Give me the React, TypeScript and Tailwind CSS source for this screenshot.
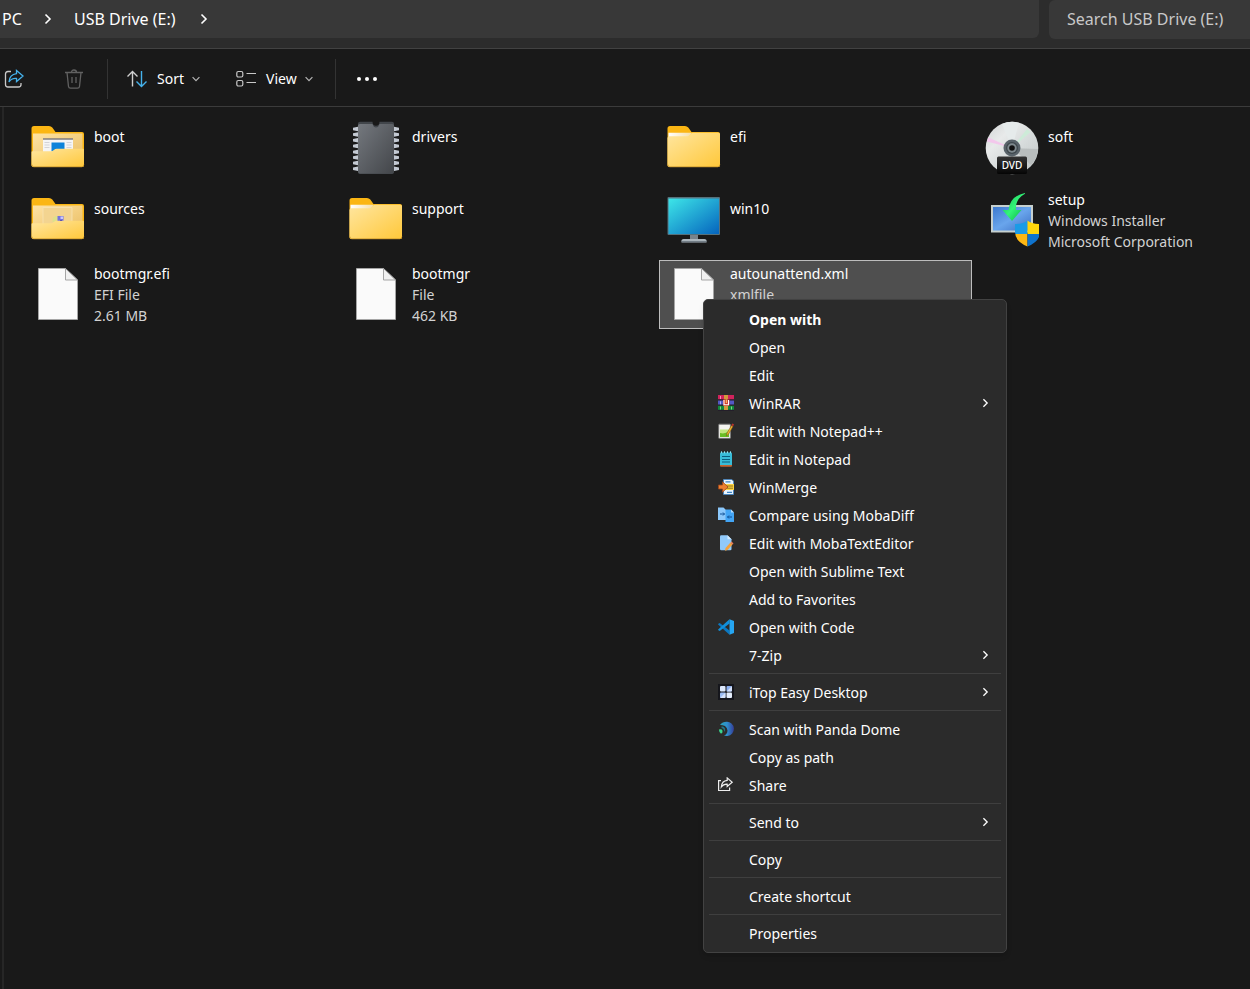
import type { ReactNode } from "react";

function Chevron({ className }: { className: string }) {
  return (
    <svg viewBox="0 0 8 12" className={className} fill="none" stroke="currentColor" strokeWidth="1.6">
      <path d="M1.5 1.5 6 6l-4.5 4.5" />
    </svg>
  );
}

function ChevronDown() {
  return (
    <svg viewBox="0 0 8 6" className="h-[6px] w-2" fill="none" stroke="#b5b5b5" strokeWidth="1.2">
      <path d="M.6 1.2 4 4.6l3.4-3.4" />
    </svg>
  );
}

function FolderIcon({ inside }: { inside?: ReactNode }) {
  return (
    <svg viewBox="0 0 54 54" className="size-[54px]">
      <defs>
        <linearGradient id="folderFront" x1="0" y1="0" x2="1" y2="1">
          <stop offset="0" stopColor="#ffe6a0" />
          <stop offset="1" stopColor="#ffc83a" />
        </linearGradient>
        <linearGradient id="folderInner" x1="0" y1="0" x2="1" y2="1">
          <stop offset="0" stopColor="#ffe3a4" />
          <stop offset="1" stopColor="#e9bd62" />
        </linearGradient>
        <linearGradient id="folderShine" x1="0" y1="0" x2="1" y2="0">
          <stop offset="0" stopColor="#ffffff" />
          <stop offset="1" stopColor="#f6dfa8" />
        </linearGradient>
      </defs>
      <path d="M.5 7.500Q.5 5 3 5H18q2 0 3.300 1.500L24.500 11h26.500Q53 11 53 13v31q0 2-2 2H2.500q-2 0-2-2z" fill="#fbb614" />
      {inside ? (
        <>
          <path d="M2 12.500h49.500V40H2z" fill="url(#folderInner)" />
          {inside}
          <path d="M.5 31q0-.7 1-.7H20q1.500 0 2.500-1l.7-.6q1-.9 2.500-.9H52q1 0 1 1V44q0 2-2 2H2.500q-2 0-2-2z" fill="url(#folderFront)" />
        </>
      ) : (
        <>
          <path d="M1.500 11.800h23l-3 5h-20z" fill="url(#folderShine)" />
          <path d="M.5 17q0-1.700 2-1.700H20q1.500 0 2.500-1.300l1.500-1.500q.7-.7 2-.7h25.500q1.500 0 1.500 1.500V44q0 2-2 2H2.500q-2 0-2-2z" fill="url(#folderFront)" />
        </>
      )}
      <path d="M.8 43.500q0 2.300 2 2.300h48q2 0 2-2.300" fill="none" stroke="#c9962a" strokeWidth=".8" />
    </svg>
  );
}

const bootPreview = (
  <>
    <path d="M12 18h30v14H12z" fill="#f5f5f5" />
    <path d="M12 18h30" stroke="#77757a" strokeWidth="1.4" />
    <path d="M13.500 21.500h5M13.500 24h5M13.500 26.500h5M35.500 21.500h5M35.500 24h5M35.500 26.500h5" stroke="#d3d3d8" strokeWidth="1" />
    <path d="M20.500 21.500h13v9h-13z" fill="#0d83da" />
  </>
);

const sourcesPreview = (
  <>
    <path d="M12 14.500h29V32H12z" fill="#f3d490" stroke="#f8e3b4" strokeWidth=".8" />
    <path d="M21.500 25l3-2h3v6h-6z" fill="#dfe08a" />
    <path d="M26.500 23h6v7h-6z" fill="#7672dc" />
    <path d="M29.500 23.500H32V26h-2.500z" fill="#c9c8fb" />
    <path d="M29 27h2v2h-2z" fill="#2b29bd" />
  </>
);

function ChipIcon() {
  const pins = [8, 13.5, 19.3, 25, 31, 36.5, 42, 47.7];
  return (
    <svg viewBox="0 0 54 54" className="size-[54px]">
      <defs>
        <linearGradient id="chip" x1="0" y1="0" x2="1" y2="1">
          <stop offset="0" stopColor="#74787e" />
          <stop offset="1" stopColor="#43464a" />
        </linearGradient>
      </defs>
      {pins.map((y) => (
        <path key={y} d={`M9 ${y - 2.3}L4 ${y - 1.3}v2.6L9 ${y + 2.3}zM45 ${y - 2.3}l5 1v2.6l-5 1z`} fill="#c3c9d2" />
      ))}
      <path d="M9 2.500Q9 .8 11 .8h12.500q0 4 3.500 4t3.500-4H43q2 0 2 1.700V51q0 2-2 2H11q-2 0-2-2z" fill="#42464b" />
      <path d="M9 4.500Q9 3 11 3h12.500q1 3.500 3.500 3.500T30.500 3H43q2 0 2 1.500v46q0 2-2 2H11q-2 0-2-2z" fill="url(#chip)" />
    </svg>
  );
}

function DvdIcon() {
  return (
    <svg viewBox="0 0 54 54" className="size-[54px]">
      <defs>
        <linearGradient id="disc" x1="0" y1="0" x2="1" y2="1">
          <stop offset="0" stopColor="#cfd3d3" />
          <stop offset=".3" stopColor="#e8eaea" />
          <stop offset=".6" stopColor="#d4d9d9" />
          <stop offset="1" stopColor="#bfc4c4" />
        </linearGradient>
        <linearGradient id="dvdTag" x1="0" y1="0" x2="0" y2="1">
          <stop offset="0" stopColor="#343434" />
          <stop offset="1" stopColor="#050505" />
        </linearGradient>
      </defs>
      <circle cx="27" cy="27" r="26.300" fill="url(#disc)" />
      <path d="M27 27 17 3A26 26 0 0 1 34 1.800z" fill="#e6ebeb" />
      <path d="M27 27 2 20.500l1.500-4z" fill="#f3c8ec" />
      <path d="M27 27 42 8l3.500 3z" fill="#cdebd8" />
      <path d="M27 27l26 1a26 26 0 0 1-7 16z" fill="#b9bebe" />
      <circle cx="27" cy="27" r="8.500" fill="#59636a" />
      <circle cx="27" cy="27" r="6" fill="#3f484d" />
      <circle cx="27" cy="27" r="4.700" fill="#7e898e" />
      <circle cx="27" cy="27" r="2.800" fill="#111" />
      <rect x="12" y="35.500" width="30" height="17.500" rx="1.500" fill="url(#dvdTag)" />
      <text x="27" y="48" textAnchor="middle" fontSize="10" fontWeight="500" fill="#fff">
        DVD
      </text>
    </svg>
  );
}

function MonitorIcon() {
  return (
    <svg viewBox="0 0 54 54" className="size-[54px]">
      <defs>
        <linearGradient id="screen" x1="0" y1="0" x2="1" y2="1">
          <stop offset="0" stopColor="#3de6e8" />
          <stop offset="1" stopColor="#0564be" />
        </linearGradient>
      </defs>
      <path d="M23 42h8v6h-8z" fill="#78838b" />
      <path d="M14.500 47.500q0-1.500 2-1.500h21q2 0 2 1.500v2h-25z" fill="#aab4bb" />
      <path d="M14.500 48.700h25" stroke="#66717a" />
      <rect x=".5" y="4" width="52.500" height="38" rx="1" fill="#56717c" />
      <path d="M1.500 5.500H52V41H1.500z" fill="url(#screen)" />
    </svg>
  );
}

function SetupIcon() {
  return (
    <svg viewBox="0 0 54 54" className="size-[54px]">
      <defs>
        <linearGradient id="setupScreen" x1="0" y1="0" x2="1" y2="1">
          <stop offset="0" stopColor="#3c79cf" />
          <stop offset=".5" stopColor="#69a5ec" />
          <stop offset="1" stopColor="#3c6fc4" />
        </linearGradient>
        <linearGradient id="setupArrow" x1="0" y1="0" x2="1" y2="1">
          <stop offset="0" stopColor="#12b74b" />
          <stop offset=".5" stopColor="#33f579" />
          <stop offset="1" stopColor="#06ae3c" />
        </linearGradient>
        <clipPath id="shield">
          <path d="M42.500 27.500q4 3.500 12.500 3.500v8q0 9.500-12.500 14.500Q30 48.500 30 39v-8q8.500 0 12.500-3.500z" />
        </clipPath>
      </defs>
      <path d="M6 12h42v27.500H6z" fill="#c6d0cf" />
      <path d="M8 14h38v23.500H8z" fill="url(#setupScreen)" />
      <path d="M40 0Q25 3 23.500 17h-6L27 28l9.500-11H31Q30 6 40 .800z" fill="url(#setupArrow)" />
      <g clipPath="url(#shield)">
        <path d="M29 26h13.500v15H29z" fill="#1b9be6" />
        <path d="M42.500 26H56v15H42.500z" fill="#ffd50c" />
        <path d="M29 41h13.500v14H29z" fill="#fdb714" />
        <path d="M42.500 41H56v14H42.500z" fill="#0f73cd" />
      </g>
    </svg>
  );
}

function PageIcon() {
  return (
    <svg viewBox="0 0 54 54" className="size-[54px]" stroke="#a5a5a5" strokeWidth="1">
      <path d="M7.500 1.500h27l12 11.500v39.500h-39z" fill="#fafafa" />
      <path d="M34.500 1.500V13h12z" fill="#f1f1f1" />
    </svg>
  );
}

type FileEntry = {
  name: string;
  icon: ReactNode;
  details?: string[];
  selected?: boolean;
};

const files: FileEntry[] = [
  { name: "boot", icon: <FolderIcon inside={bootPreview} /> },
  { name: "drivers", icon: <ChipIcon /> },
  { name: "efi", icon: <FolderIcon /> },
  { name: "soft", icon: <DvdIcon /> },
  { name: "sources", icon: <FolderIcon inside={sourcesPreview} /> },
  { name: "support", icon: <FolderIcon /> },
  { name: "win10", icon: <MonitorIcon /> },
  { name: "setup", icon: <SetupIcon />, details: ["Windows Installer", "Microsoft Corporation"] },
  { name: "bootmgr.efi", icon: <PageIcon />, details: ["EFI File", "2.61 MB"] },
  { name: "bootmgr", icon: <PageIcon />, details: ["File", "462 KB"] },
  { name: "autounattend.xml", icon: <PageIcon />, details: ["xmlfile"], selected: true },
];

function MenuSvg({ children }: { children: ReactNode }) {
  return (
    <svg viewBox="0 0 16 16" className="size-4">
      {children}
    </svg>
  );
}

const winrarIcon = (
  <MenuSvg>
    <path d="M0 0h16v4.500H0z" fill="#d0235c" />
    <path d="M0 5.300h16v4.500H0z" fill="#5457c4" />
    <path d="M0 10.500h16V15H0z" fill="#128a3c" />
    <path d="M0 4.900h16M0 10.100h16M0 15.300h16" stroke="#231a2a" strokeWidth=".9" />
    <path d="M2.500 1v3" stroke="#f28fb1" />
    <path d="M2.500 6.300v3" stroke="#aab0f5" />
    <path d="M2.500 11.500v3M13.500 11.500v3" stroke="#7fd67c" />
    <path d="M6 0h4v4.500H6zM6 10.500h4V15H6z" fill="#d39a3c" />
    <path d="M5 4.500h6.500v6.300H5z" fill="#d23a2c" />
    <path d="M6 5v4.800h4.500V5" fill="none" stroke="#fff" strokeWidth="1.100" />
    <path d="M8.300 4.500v3.500" stroke="#f6d873" />
  </MenuSvg>
);

const nppIcon = (
  <MenuSvg>
    <path d="M.8 1.500h11.500v13.700H.8z" fill="#f4f4f0" stroke="#999" strokeWidth=".6" />
    <path d="M1.500 1.300h10.500" stroke="#8d8d8d" strokeWidth="1.600" strokeDasharray="1 1" />
    <path d="M2 6.500h9V14H2z" fill="#c1e67f" />
    <path d="M2 10q5 1.500 9-2v6H2z" fill="#69bd25" />
    <path d="M13.500 2.500 9 10l-.7 3L10.700 11 15 3.500z" fill="#f2b32e" stroke="#704b12" strokeWidth=".5" />
    <path d="m13.300 2.300 1-1.800L16 1.300l-.8 2z" fill="#b9322a" />
  </MenuSvg>
);

const notepadIcon = (
  <MenuSvg>
    <path d="M2 2.500q0-1 1-1h10q1 0 1 1V14H2z" fill="#38bcd8" />
    <path d="M2 14h12v.8q0 .9-1 .9H3q-1 0-1-.9z" fill="#c26432" />
    <path d="M3.500.3v2M6.500.3v2M9.500.3v2M12.500.3v2" stroke="#8ce6f4" strokeWidth="1" />
    <path d="M4 5.500h8M4 8.500h8M4 11h8" stroke="#0b5d7e" strokeWidth="1" />
  </MenuSvg>
);

const winmergeIcon = (
  <MenuSvg>
    <path d="M5.500.4h8L15.600 2v4.500H5.500z" fill="#e9f4fd" stroke="#3b83c5" strokeWidth=".8" />
    <path d="M5.500 10h10v5.500h-10z" fill="#e9f4fd" stroke="#3b83c5" strokeWidth=".8" />
    <path d="M7.500 2.800h5M9 13.300h5" stroke="#3b83c5" strokeWidth="1.300" />
    <path d="M6 5h10v6H6z" fill="#fbd243" />
    <path d="M9 7h6M9 9.200h6" stroke="#8b6a13" strokeWidth=".9" />
    <path d="M.5 6H4.500V2.800L10 8l-5.500 5.200V10h-4z" fill="#ec8030" stroke="#9c451b" strokeWidth=".8" />
  </MenuSvg>
);

const mobaDiffIcon = (
  <MenuSvg>
    <path d="M0 .500h5.500L8.500 3.500V13H0z" fill="#8cc8fb" />
    <path d="M7.500 2.500H13l3 3V15H7.500z" fill="#43a5f5" />
    <path d="M13 2.500l3 3h-3z" fill="#b6dcfd" />
    <path d="M2 7h4.500M5 5.500 6.500 7 5 8.500M14 10H9.500M11 8.500 9.500 10l1.500 1.500" stroke="#0e4f96" strokeWidth="1" fill="none" />
  </MenuSvg>
);

const mobaEditIcon = (
  <MenuSvg>
    <path d="M2 1.500Q2 .3 3.200.3H9.500l4 4V14q0 1.300-1.300 1.300H3.200Q2 15.300 2 14z" fill="#90c9fa" />
    <path d="M9.500.3l4 4h-4z" fill="#d2e9fd" />
    <path d="m7.500 13 5-5.500 2 2-5 5.500-2.500.7z" fill="#f4a13b" />
    <path d="m12.500 7.500 1-1 2 2-1 1z" fill="#ef7d5a" />
  </MenuSvg>
);

const vscodeIcon = (
  <MenuSvg>
    <path d="M1.700 4.100.4 4.800q-.5.500 0 1L11.500 15.800V11.500z" fill="#0a78c2" />
    <path d="M1.700 11.900.4 11.200q-.5-.5 0-1L11.500.2V4.500z" fill="#1190db" />
    <path d="M11.500.2 16 2v12l-4.500 1.800z" fill="#26a6f2" />
  </MenuSvg>
);

const itopIcon = (
  <MenuSvg>
    <path d="M0 0h16v16H0z" fill="#15161c" />
    <rect x="2" y="2" width="5.500" height="5.500" rx="1" fill="#dbe7fb" />
    <rect x="8.500" y="2" width="5.500" height="5.500" rx="1" fill="#8cb0f0" />
    <rect x="2" y="8.500" width="5.500" height="5.500" rx="1" fill="#9bbcf4" />
    <rect x="8.500" y="8.500" width="5.500" height="5.500" rx="1" fill="#e4edfc" />
    <path d="M8.500 7.500 14 2v4.500q0 1-1 1zM2 14l5.500-5.500V13q0 1-1 1z" fill="#d5e2fa" />
  </MenuSvg>
);

const pandaIcon = (
  <MenuSvg>
    <defs>
      <linearGradient id="panda" x1="0" y1="0" x2="1" y2="0">
        <stop offset="0" stopColor="#2ba3b5" />
        <stop offset=".5" stopColor="#2f8fce" />
        <stop offset="1" stopColor="#353c96" />
      </linearGradient>
    </defs>
    <path d="M2 4Q4.500.7 8.500.7a6.800 7 0 0 1 1 14.200q-2 .3-3.500-.4Q9.500 13 9.500 9.500 9.300 6.500 7 5 4 3.800 2 4z" fill="url(#panda)" />
    <path d="M3.500 5.500Q6 5 7 7.500q.5 2-.5 3.500Q6 7.500 3.500 7z" fill="#1f7685" />
    <path d="M.9 8.500q3-.8 3.600 1.200T3 12.700Q1 11 .9 8.500z" fill="#3ad68c" />
  </MenuSvg>
);

const shareIcon = (
  <svg viewBox="0 0 16 16" className="size-4" fill="none" stroke="#ededed" strokeWidth="1.200">
    <path d="M3 3.600H.6v9.900h11V10.500" />
    <path d="M9.200.9 14.200 5.200l-5 4.200V7.200Q5.500 7 3.300 10 3.800 4 9.200 3.400z" />
  </svg>
);

type MenuEntry = {
  label: string;
  icon?: ReactNode;
  submenu?: boolean;
  bold?: boolean;
};

const menuGroups: MenuEntry[][] = [
  [
    { label: "Open with", bold: true },
    { label: "Open" },
    { label: "Edit" },
    { label: "WinRAR", icon: winrarIcon, submenu: true },
    { label: "Edit with Notepad++", icon: nppIcon },
    { label: "Edit in Notepad", icon: notepadIcon },
    { label: "WinMerge", icon: winmergeIcon },
    { label: "Compare using MobaDiff", icon: mobaDiffIcon },
    { label: "Edit with MobaTextEditor", icon: mobaEditIcon },
    { label: "Open with Sublime Text" },
    { label: "Add to Favorites" },
    { label: "Open with Code", icon: vscodeIcon },
    { label: "7-Zip", submenu: true },
  ],
  [{ label: "iTop Easy Desktop", icon: itopIcon, submenu: true }],
  [
    { label: "Scan with Panda Dome", icon: pandaIcon },
    { label: "Copy as path" },
    { label: "Share", icon: shareIcon },
  ],
  [{ label: "Send to", submenu: true }],
  [{ label: "Copy" }],
  [{ label: "Create shortcut" }],
  [{ label: "Properties" }],
];

function AddressBar() {
  return (
    <header className="flex h-[49px] gap-[10px] border-b border-[#424242] bg-[#2c2c2c] text-base">
      <nav aria-label="Path" className="flex h-[38px] flex-1 items-center rounded-br-md bg-[#383838] pl-[2px] text-white">
        <button type="button" className="w-[42px] text-left">PC</button>
        <Chevron className="h-3 w-2" />
        <button type="button" className="mr-6 ml-[22px]">USB Drive (E:)</button>
        <Chevron className="h-3 w-2" />
      </nav>
      <input
        type="search"
        aria-label="Search USB Drive (E:)"
        placeholder="Search USB Drive (E:)"
        className="h-[39px] w-[201px] rounded-l-md bg-[#383838] pb-[2px] pl-[18px] text-white outline-none placeholder:text-[#c8c8c8]"
      />
    </header>
  );
}

function Toolbar() {
  return (
    <div role="toolbar" className="flex h-[58px] items-center border-b border-[#3b3b3b] pt-[2px] pl-1 text-sm text-white">
      <button type="button" aria-label="Share">
        <svg viewBox="0 0 20 20" className="size-5" fill="none" strokeWidth="1.300">
          <path d="M7 2.500H4Q1.500 2.500 1.500 5v10.500Q1.500 18 4 18h10.500Q17 18 17 15.500V14" stroke="#c9c9c9" />
          <path d="M12.500 1.500 19 7l-6.500 5.500V9.500Q7.500 9 5 13 5.500 5.500 12.500 4.700z" stroke="#45b2ec" />
        </svg>
      </button>
      <button type="button" aria-label="Delete" className="ml-10">
        <svg viewBox="0 0 20 20" className="size-5" fill="none" stroke="#616161" strokeWidth="1.300">
          <path d="M1 3.500h18M7.500 3.500q0-2.500 2.500-2.500t2.500 2.500M3 3.500l1.500 14q.2 1.700 2 1.700h7q1.800 0 2-1.700l1.500-14M8 8v6M12 8v6" />
        </svg>
      </button>
      <div className="ml-[23px] h-10 w-px bg-[#333]" />
      <button type="button" className="ml-[19px] flex items-center">
        <svg viewBox="0 0 20 20" className="size-5" fill="none" strokeWidth="1.400">
          <path d="M5.500 17.500v-15M.5 7.500l5-5 5 5" stroke="#cfcfcf" />
          <path d="M14.500 2v15.500M9.500 12.500l5 5 5-5" stroke="#45b2ec" />
        </svg>
        <span className="mr-2 ml-[10px]">Sort</span>
        <ChevronDown />
      </button>
      <button type="button" className="ml-9 flex items-center">
        <svg viewBox="0 0 20 20" className="size-5" fill="none" stroke="#c9c9c9" strokeWidth="1.200">
          <rect x=".8" y="2.500" width="6" height="5.500" rx="1.500" />
          <rect x=".8" y="11.500" width="6" height="5.500" rx="1.500" />
          <path d="M10.500 4.500H20M10.500 13.500H20" />
        </svg>
        <span className="mr-2 ml-[10px]">View</span>
        <ChevronDown />
      </button>
      <div className="ml-[22px] h-10 w-px bg-[#333]" />
      <button type="button" aria-label="See more" className="ml-5">
        <svg viewBox="0 0 22 6" className="h-[6px] w-[22px]" fill="#fff">
          <circle cx="3" cy="3" r="2" />
          <circle cx="11" cy="3" r="2" />
          <circle cx="19" cy="3" r="2" />
        </svg>
      </button>
    </div>
  );
}

function FileTile({ file }: { file: FileEntry }) {
  return (
    <button
      type="button"
      className={`flex h-[69px] w-full items-center gap-[9px] border pl-[7px] text-left ${
        file.selected ? "border-[#bdbdbd] bg-[#4f4f4f]" : "border-transparent"
      }`}
    >
      <span className="mb-[2px] shrink-0">{file.icon}</span>
      <span className={`leading-[21px] whitespace-nowrap ${file.details ? "min-h-[63px]" : "min-h-[46px]"}`}>
        <span className="block text-white">{file.name}</span>
        {file.details?.map((line) => (
          <span key={line} className="block text-[#d2d2d2]">
            {line}
          </span>
        ))}
      </span>
    </button>
  );
}

function ContextMenu() {
  return (
    <div
      role="menu"
      className="absolute top-[299px] left-[703px] w-[304px] rounded-[5px] border border-[#424242] bg-[#2b2b2b] pt-[6px] pb-1 text-white shadow-md"
    >
      {menuGroups.map((group, i) => (
        <div key={group[0].label}>
          {i > 0 && <hr className="mx-[5px] mt-[3px] mb-[5px] border-[#3f3f3f]" />}
          {group.map((item) => (
            <button
              key={item.label}
              type="button"
              role="menuitem"
              className="flex h-7 w-full items-center pr-[17px] pl-[14px] text-left"
            >
              <span className="mr-[15px] mb-[2px] size-4">{item.icon}</span>
              <span className={item.bold ? "flex-1 font-bold" : "flex-1"}>{item.label}</span>
              {item.submenu && <Chevron className="mb-[2px] h-[10px] w-[7px]" />}
            </button>
          ))}
        </div>
      ))}
    </div>
  );
}

export default function App() {
  return (
    <div className="relative flex min-h-screen flex-col overflow-hidden bg-[#191919] font-['Noto_Sans','Open_Sans',sans-serif] text-sm">
      <AddressBar />
      <Toolbar />
      <main className="ml-[2px] flex-1 border-l-2 border-[#262626] pt-[7px] pl-[19px]">
        <ul className="grid grid-cols-[repeat(4,313px)] grid-rows-[69px_71px_69px] gap-x-[5px] gap-y-[3px]">
          {files.map((file) => (
            <li key={file.name}>
              <FileTile file={file} />
            </li>
          ))}
        </ul>
      </main>
      <ContextMenu />
    </div>
  );
}
